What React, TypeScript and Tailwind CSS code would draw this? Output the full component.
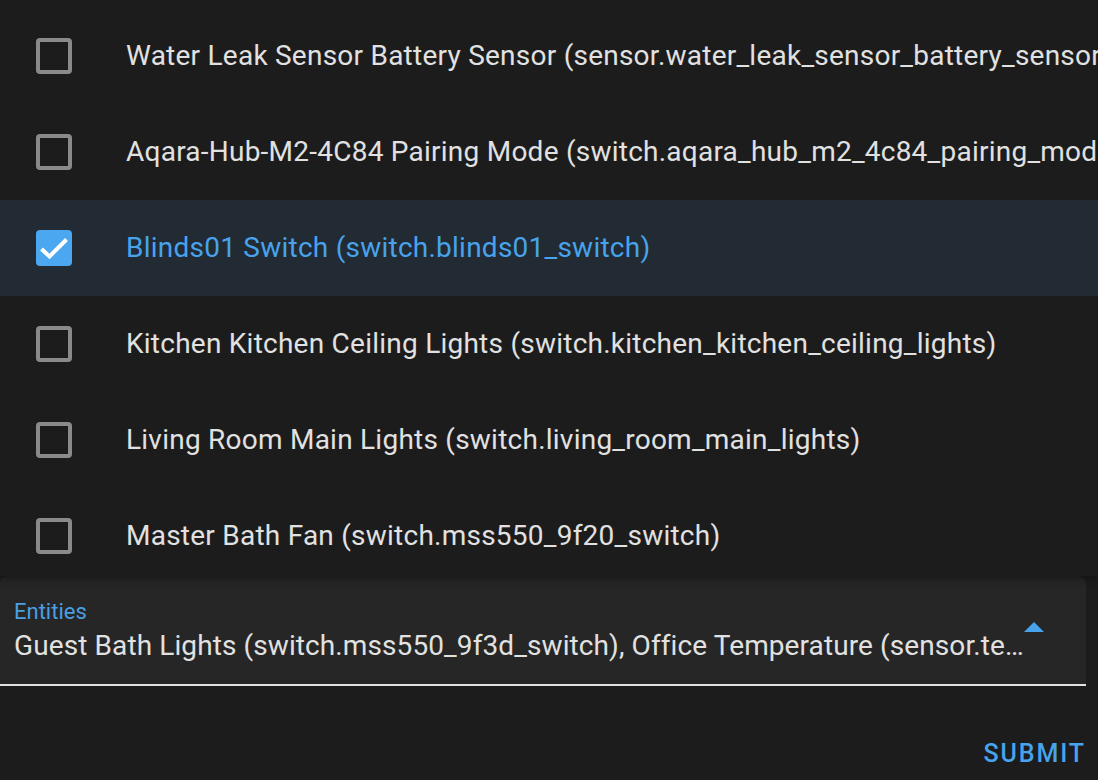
import React from "react";

const items = [
  { label: "Water Leak Sensor Battery Sensor (sensor.water_leak_sensor_battery_sensor)", checked: false },
  { label: "Aqara-Hub-M2-4C84 Pairing Mode (switch.aqara_hub_m2_4c84_pairing_mode)", checked: false },
  { label: "Blinds01 Switch (switch.blinds01_switch)", checked: true },
  { label: "Kitchen Kitchen Ceiling Lights (switch.kitchen_kitchen_ceiling_lights)", checked: false },
  { label: "Living Room Main Lights (switch.living_room_main_lights)", checked: false },
  { label: "Master Bath Fan (switch.mss550_9f20_switch)", checked: false },
];

function Checkbox({ checked }: { checked: boolean }) {
  if (checked) {
    return (
      <div className="w-[36px] h-[36px] rounded-[4px] bg-[#4ba7ef] shrink-0">
        <svg width="36" height="36" viewBox="0 0 36 36">
          <path d="M5.5 19 L13.5 26.5 L30.5 9.5" fill="none" stroke="#ffffff" strokeWidth="4" />
        </svg>
      </div>
    );
  }
  return <div className="w-[36px] h-[36px] rounded-[4px] border-[4px] border-[#8a8a8a] shrink-0" />;
}

export default function App() {
  return (
    <div
      className="w-[1098px] h-[780px] bg-[#1c1c1c] overflow-hidden flex flex-col"
      style={{ fontFamily: "Roboto, 'Liberation Sans', sans-serif" }}
    >
      <div className="relative z-10 h-[576px] overflow-hidden pt-[8px] bg-[#1c1c1c] shadow-[0_3px_8px_rgba(0,0,0,0.35)] shrink-0">
        {items.map((it, i) => (
          <div
            key={i}
            className={`h-[96px] flex items-center pl-[36px] whitespace-nowrap ${it.checked ? "bg-[#222a33]" : ""}`}
          >
            <Checkbox checked={it.checked} />
            <span
              className={`ml-[54px] text-[28px] leading-none tracking-[0.24px] ${it.checked ? "text-[#47a3ec]" : "text-[#e1e1e1]"}`}
            >
              {it.label}
            </span>
          </div>
        ))}
      </div>
      <div className="w-[1086px] h-[110px] bg-[#262626] rounded-t-[8px] border-b-2 border-[#e1e1e1] relative shrink-0 pl-[14px] pr-[46px]">
        <div className="pt-[23px] text-[22px] leading-[26px] text-[#4a9fe2]">Entities</div>
        <div className="mt-[3px] text-[28px] leading-[36px] tracking-[0.1px] text-[#e1e1e1] whitespace-nowrap overflow-hidden text-ellipsis">
          Guest Bath Lights (switch.mss550_9f3d_switch), Office Temperature (sensor.temperature_office)
        </div>
        <svg className="absolute left-[1024px] top-[46px]" width="20" height="10" viewBox="0 0 20 10">
          <path d="M0 10 L10 0 L20 10 Z" fill="#47a3ec" />
        </svg>
      </div>
      <div className="flex justify-end pr-[12px] pt-[53px]">
        <span className="text-[25px] leading-[30px] font-medium tracking-[1.9px] text-[#47a3ec]">SUBMIT</span>
      </div>
    </div>
  );
}
